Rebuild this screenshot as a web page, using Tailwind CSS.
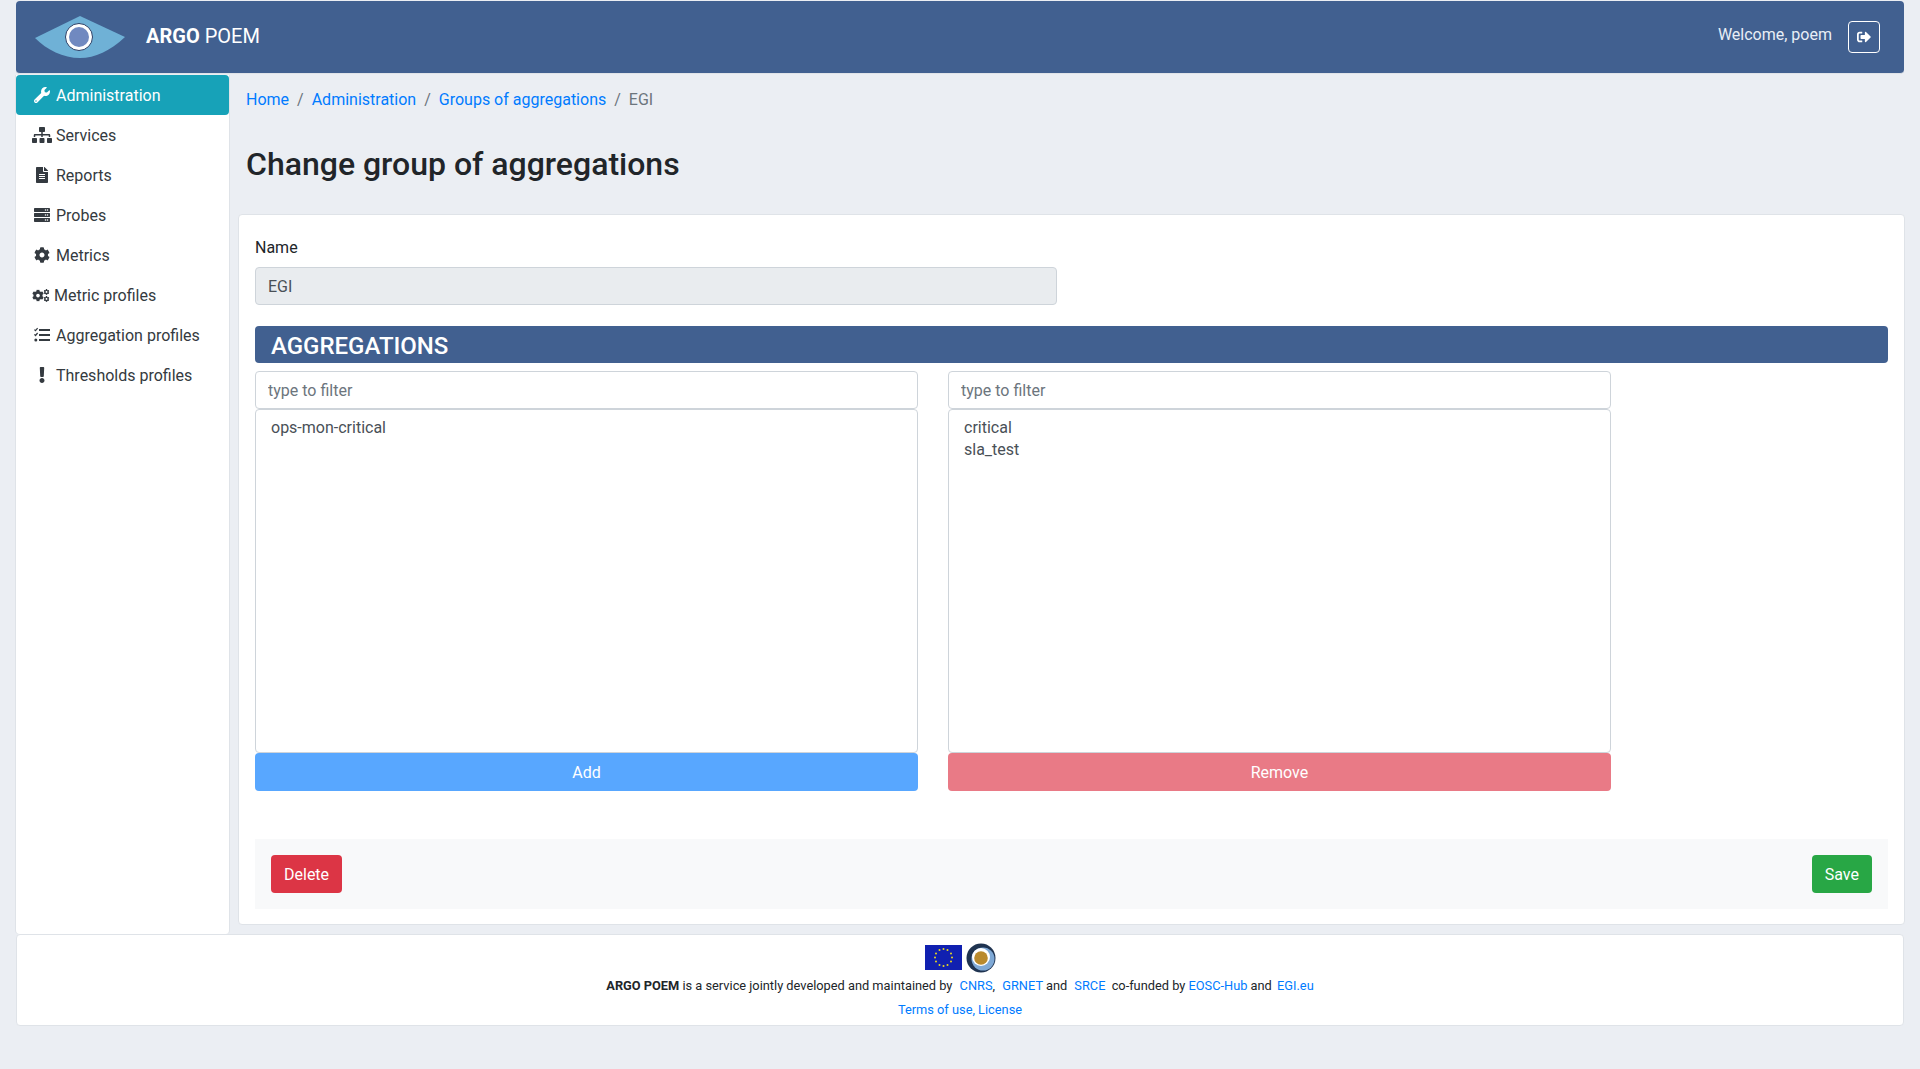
<!DOCTYPE html>
<html lang="en">
<head>
    <meta charset="UTF-8" />
    <title>ARGO POEM</title>
    <script src="https://cdn.jsdelivr.net/npm/@tailwindcss/browser@4"></script>
</head>
<body class="bg-[#ebeef3] text-[#212529] font-['Roboto',sans-serif] text-base h-[1069px] overflow-hidden">

<svg class="hidden">
    <symbol id="cog" viewBox="0 0 512 512"><path fill="currentColor" d="M487.4 315.7l-42.6-24.6c4.3-23.2 4.3-47 0-70.2l42.6-24.6c4.9-2.8 7.1-8.6 5.5-14-11.1-35.6-30-67.8-54.7-94.6-3.8-4.1-10-5.1-14.8-2.3L380.8 110c-17.9-15.4-38.5-27.3-60.8-35.1V25.8c0-5.6-3.9-10.5-9.4-11.7-36.7-8.2-74.3-7.8-109.2 0-5.5 1.2-9.4 6.1-9.4 11.7V75c-22.2 7.9-42.8 19.8-60.8 35.1L88.7 85.5c-4.9-2.8-11-1.9-14.8 2.3-24.7 26.7-43.6 58.9-54.7 94.6-1.7 5.4.6 11.2 5.5 14L67.3 221c-4.3 23.2-4.3 47 0 70.2l-42.6 24.6c-4.9 2.8-7.1 8.6-5.5 14 11.1 35.6 30 67.8 54.7 94.6 3.8 4.1 10 5.1 14.8 2.3l42.6-24.6c17.9 15.4 38.5 27.3 60.8 35.1v49.2c0 5.6 3.9 10.5 9.4 11.7 36.7 8.2 74.3 7.8 109.2 0 5.5-1.2 9.4-6.1 9.4-11.7v-49.2c22.2-7.9 42.8-19.8 60.8-35.1l42.6 24.6c4.9 2.8 11 1.9 14.8-2.3 24.7-26.7 43.6-58.9 54.7-94.6 1.5-5.5-.7-11.3-5.6-14.1zM256 336c-44.1 0-80-35.9-80-80s35.9-80 80-80 80 35.9 80 80-35.9 80-80 80z"/></symbol>
</svg>

<div class="px-4 pt-px">

    <!-- Header -->
    <header class="h-[73px] bg-[#416090] rounded flex items-center justify-between text-white border-b border-[#dfe3e8]">
        <div class="flex items-center">
            <svg class="ml-[19px] w-[90px] h-[42px] mb-px" viewBox="0 0 90 42">
                <path fill="#6fb1d6" d="M0 22 L45 0 L90 21 C75 35 60 42 45 42 C28 42 12 34 0 22Z"/>
                <circle cx="44" cy="21" r="13.5" fill="#fff" stroke="#2b3f66" stroke-width="1"/>
                <circle cx="44" cy="21" r="10" fill="#7089c0"/>
            </svg>
            <span class="ml-[21px] text-xl mb-[2px]"><b class="font-bold">ARGO</b> POEM</span>
        </div>
        <div class="flex items-center mr-6">
            <span class="text-[#e8eef6] mb-[5px]">Welcome, poem</span>
            <span class="ml-4 w-8 h-8 border border-white rounded flex items-center justify-center">
                <svg class="w-[14px] h-[14px]" viewBox="0 0 512 512"><path fill="#fff" d="M497 273L329 441c-15 15-41 4.5-41-17v-96H152c-13.3 0-24-10.7-24-24v-96c0-13.3 10.7-24 24-24h136V88c0-21.4 25.9-32 41-17l168 168c9.3 9.4 9.3 24.6 0 34zM192 436v-40c0-6.6-5.4-12-12-12H96c-17.7 0-32-14.3-32-32V160c0-17.7 14.3-32 32-32h84c6.6 0 12-5.4 12-12V76c0-6.6-5.4-12-12-12H96c-53 0-96 43-96 96v192c0 53 43 96 96 96h84c6.6 0 12-5.4 12-12z"/></svg>
            </span>
        </div>
    </header>

    <div class="flex mt-px">

        <!-- Sidebar -->
        <nav class="w-[214px] h-[859px] bg-white border-r border-[#dfe3e8] shadow-[-1px_0_0_#dfe3e8] rounded-b shrink-0 text-[#343a40]">
            <a class="h-10 pt-[2px] flex items-center bg-[#17a2b8] text-white rounded">
                <span class="w-[35px] mb-[2px] flex justify-end pr-px">
                    <svg class="w-4 h-4" viewBox="0 0 512 512"><path fill="currentColor" d="M507.73 109.1c-2.24-9.03-13.54-12.09-20.12-5.51l-74.36 74.36-67.88-11.31-11.31-67.88 74.36-74.36c6.62-6.62 3.43-17.9-5.66-20.16-47.38-11.74-99.55.91-136.58 37.93-39.64 39.64-50.55 97.1-34.05 147.2L18.74 402.76c-24.99 24.99-24.99 65.51 0 90.5 24.99 24.99 65.51 24.99 90.5 0l213.21-213.21c50.12 16.71 107.47 5.68 147.37-34.22 37.07-37.07 49.7-89.32 37.91-136.73zM64 472c-13.25 0-24-10.75-24-24 0-13.26 10.75-24 24-24s24 10.74 24 24c0 13.25-10.75 24-24 24z"/></svg>
                </span>
                <span class="ml-[5px]">Administration</span>
            </a>
            <a class="h-10 pt-[2px] flex items-center">
                <span class="w-[36px] mb-[2px] flex justify-end">
                    <svg class="w-5 h-4" viewBox="0 0 640 512"><path fill="currentColor" d="M128 352H32c-17.67 0-32 14.33-32 32v96c0 17.67 14.33 32 32 32h96c17.67 0 32-14.33 32-32v-96c0-17.67-14.33-32-32-32zm-24-80h192v48h48v-48h192v48h48v-57.59c0-21.17-17.23-38.41-38.41-38.41H344v-64h40c17.67 0 32-14.33 32-32V32c0-17.67-14.33-32-32-32H256c-17.67 0-32 14.33-32 32v96c0 17.67 14.33 32 32 32h40v64H94.41C73.23 224 56 241.23 56 262.41V320h48v-48zm264 80h-96c-17.67 0-32 14.33-32 32v96c0 17.67 14.33 32 32 32h96c17.67 0 32-14.33 32-32v-96c0-17.67-14.33-32-32-32zm240 0h-96c-17.67 0-32 14.33-32 32v96c0 17.67 14.33 32 32 32h96c17.67 0 32-14.33 32-32v-96c0-17.67-14.33-32-32-32z"/></svg>
                </span>
                <span class="ml-[4px]">Services</span>
            </a>
            <a class="h-10 pt-[2px] flex items-center">
                <span class="w-[32px] mb-[2px] flex justify-end">
                    <svg class="w-3 h-4" viewBox="0 0 384 512"><path fill="currentColor" d="M224 136V0H24C10.7 0 0 10.7 0 24v464c0 13.3 10.7 24 24 24h336c13.3 0 24-10.7 24-24V160H248c-13.2 0-24-10.8-24-24zm64 236c0 6.6-5.4 12-12 12H108c-6.6 0-12-5.4-12-12v-8c0-6.6 5.4-12 12-12h168c6.6 0 12 5.4 12 12v8zm0-64c0 6.6-5.4 12-12 12H108c-6.6 0-12-5.4-12-12v-8c0-6.6 5.4-12 12-12h168c6.6 0 12 5.4 12 12v8zm0-72v8c0 6.6-5.4 12-12 12H108c-6.6 0-12-5.4-12-12v-8c0-6.6 5.4-12 12-12h168c6.6 0 12 5.4 12 12zm96-114.1v6.1H256V0h6.1c6.4 0 12.5 2.5 17 7l97.9 98c4.5 4.5 7 10.6 7 16.9z"/></svg>
                </span>
                <span class="ml-[8px]">Reports</span>
            </a>
            <a class="h-10 pt-[2px] flex items-center">
                <span class="w-[34px] mb-[2px] flex justify-end">
                    <svg class="w-4 h-4" viewBox="0 0 512 512"><path fill="currentColor" d="M0 64c0-18 14-32 32-32h448c18 0 32 14 32 32v80c0 9-7 16-16 16H16c-9 0-16-7-16-16zM368 72a24 24 0 1 0 0 48 24 24 0 0 0 0-48zm64 0a24 24 0 1 0 0 48 24 24 0 0 0 0-48zM0 208c0-9 7-16 16-16h480c9 0 16 7 16 16v96c0 9-7 16-16 16H16c-9 0-16-7-16-16zm368 24a24 24 0 1 0 0 48 24 24 0 0 0 0-48zm64 0a24 24 0 1 0 0 48 24 24 0 0 0 0-48zM16 352h480c9 0 16 7 16 16v80c0 18-14 32-32 32H32c-18 0-32-14-32-32v-80c0-9 7-16 16-16zm352 40a24 24 0 1 0 0 48 24 24 0 0 0 0-48zm64 0a24 24 0 1 0 0 48 24 24 0 0 0 0-48z"/></svg>
                </span>
                <span class="ml-[6px]">Probes</span>
            </a>
            <a class="h-10 pt-[2px] flex items-center">
                <span class="w-[34px] mb-[2px] flex justify-end">
                    <svg class="w-4 h-4"><use href="#cog"/></svg>
                </span>
                <span class="ml-[6px]">Metrics</span>
            </a>
            <a class="h-10 pt-[2px] flex items-center">
                <span class="w-[34px] mb-[2px] flex justify-end">
                    <svg class="w-[18px] h-4" viewBox="0 0 18 16">
                        <use href="#cog" x="0" y="2.5" width="12" height="12"/>
                        <use href="#cog" x="11.5" y="2" width="6" height="6"/>
                        <use href="#cog" x="11.5" y="9" width="6" height="6"/>
                    </svg>
                </span>
                <span class="ml-[4px]">Metric profiles</span>
            </a>
            <a class="h-10 pt-[2px] flex items-center">
                <span class="w-[34px] mb-[2px] flex justify-end">
                    <svg class="w-4 h-4" viewBox="0 0 16 16" fill="none" stroke="currentColor">
                        <path stroke-width="1.2" d="M0.4 2.6l1.1 1.1L3.6 1.2M0.4 7.4l1.1 1.1 2.1-2.5"/>
                        <circle cx="1.8" cy="13" r="1.5" fill="currentColor" stroke="none"/>
                        <path stroke-width="2" d="M5 3H16M5 8H16M5 13H16"/>
                    </svg>
                </span>
                <span class="ml-[6px]">Aggregation profiles</span>
            </a>
            <a class="h-10 pt-[2px] flex items-center">
                <span class="w-[29px] mb-[2px] flex justify-end">
                    <svg class="w-[6px] h-4" viewBox="0 0 192 512"><path fill="currentColor" d="M176 432c0 44.112-35.888 80-80 80s-80-35.888-80-80 35.888-80 80-80 80 35.888 80 80zM25.26 25.199l13.6 272C39.499 309.972 50.041 320 62.83 320h66.34c12.789 0 23.331-10.028 23.97-22.801l13.6-272C167.425 11.49 156.496 0 142.77 0H49.23C35.504 0 24.575 11.49 25.26 25.199z"/></svg>
                </span>
                <span class="ml-[11px]">Thresholds profiles</span>
            </a>
        </nav>

        <!-- Main -->
        <main class="flex-1 pl-2">
            <ol class="flex items-center h-12 pt-[2px] pl-2 text-[#6c757d]">
                <li class="text-[#007bff]">Home</li>
                <li class="px-2">/</li>
                <li class="text-[#007bff]">Administration</li>
                <li class="px-2">/</li>
                <li class="text-[#007bff]">Groups of aggregations</li>
                <li class="px-2">/</li>
                <li>EGI</li>
            </ol>
            <h1 class="pl-2 mt-[22px] text-[32px] leading-[38px] font-medium">Change group of aggregations</h1>

            <section class="mt-[31px] -mr-px h-[711px] bg-white border border-[#dfe3e8] rounded px-4 pt-4">
                <label class="block leading-6 mt-[5px]">Name</label>
                <input class="block mt-[7px] w-[802px] h-[38px] px-3 bg-[#e9ecef] border border-[#ced4da] rounded text-[#495057]" value="EGI" disabled />

                <h3 class="mt-[21px] h-[37px] bg-[#416090] rounded text-white text-2xl leading-[40px] font-medium pl-4">AGGREGATIONS</h3>

                <div class="mt-2 flex gap-[30px]">
                    <div class="w-[663px]">
                        <input class="block w-full h-[38px] px-3 border border-[#ced4da] rounded placeholder:text-[#6c757d]" placeholder="type to filter" />
                        <div class="h-[344px] border border-[#ced4da] rounded px-[15px] pt-[7px] leading-[22px] text-[#495057]">
                            <div>ops-mon-critical</div>
                        </div>
                        <button class="block w-full h-[38px] pt-px bg-[#58a7ff] text-white rounded">Add</button>
                    </div>
                    <div class="w-[663px]">
                        <input class="block w-full h-[38px] px-3 border border-[#ced4da] rounded placeholder:text-[#6c757d]" placeholder="type to filter" />
                        <div class="h-[344px] border border-[#ced4da] rounded px-[15px] pt-[7px] leading-[22px] text-[#495057]">
                            <div>critical</div>
                            <div>sla_test</div>
                        </div>
                        <button class="block w-full h-[38px] pt-px bg-[#e97a86] text-white rounded">Remove</button>
                    </div>
                </div>

                <div class="mt-[48px] h-[70px] bg-[#f8f9fa] flex items-center justify-between px-4">
                    <button class="h-[38px] px-[13px] pt-px bg-[#dc3545] text-white rounded">Delete</button>
                    <button class="h-[38px] px-[13px] pt-px bg-[#28a745] text-white rounded">Save</button>
                </div>
            </section>
        </main>
    </div>

    <!-- Footer -->
    <footer class="h-[92px] bg-white border border-[#dfe3e8] rounded text-center text-[12.8px] pt-[7px] relative">
        <div class="flex justify-center items-center gap-[4px] h-[31px]">
            <svg class="w-[37px] h-[25px]" viewBox="0 0 37 25">
                <rect width="37" height="25" fill="#1020b0"/>
                <g fill="#e8d820">
                    <circle cx="18.5" cy="4" r="1"/><circle cx="22.5" cy="5" r="1"/><circle cx="26" cy="8.5" r="1"/><circle cx="27" cy="12.5" r="1"/><circle cx="26" cy="16.5" r="1"/><circle cx="22.5" cy="20" r="1"/><circle cx="18.5" cy="21" r="1"/><circle cx="14.5" cy="20" r="1"/><circle cx="11" cy="16.5" r="1"/><circle cx="10" cy="12.5" r="1"/><circle cx="11" cy="8.5" r="1"/><circle cx="14.5" cy="5" r="1"/>
                </g>
            </svg>
            <svg class="w-[30px] h-[30px]" viewBox="0 0 30 30">
                <circle cx="15" cy="15" r="14.5" fill="#1f3350"/>
                <circle cx="17" cy="16" r="11.5" fill="#7fa9d6"/>
                <circle cx="15" cy="14" r="9" fill="#fff"/>
                <circle cx="15" cy="15" r="6.8" fill="#b98a2e"/>
            </svg>
        </div>
        <p class="mt-[4px] leading-[18px] text-[#212529]"><b class="font-bold">ARGO POEM</b> is a service jointly developed and maintained by <a class="text-[#007bff] ml-1">CNRS</a>, <a class="text-[#007bff] ml-1">GRNET</a> and <a class="text-[#007bff] ml-1">SRCE</a> <span class="ml-[3px]">co-funded by</span> <a class="text-[#007bff]">EOSC-Hub</a> and <a class="text-[#007bff] ml-[2px]">EGI.eu</a></p>
        <p class="mt-[6px] leading-[18px] text-[#007bff]">Terms of use, License</p>
    </footer>
</div>

</body>
</html>
